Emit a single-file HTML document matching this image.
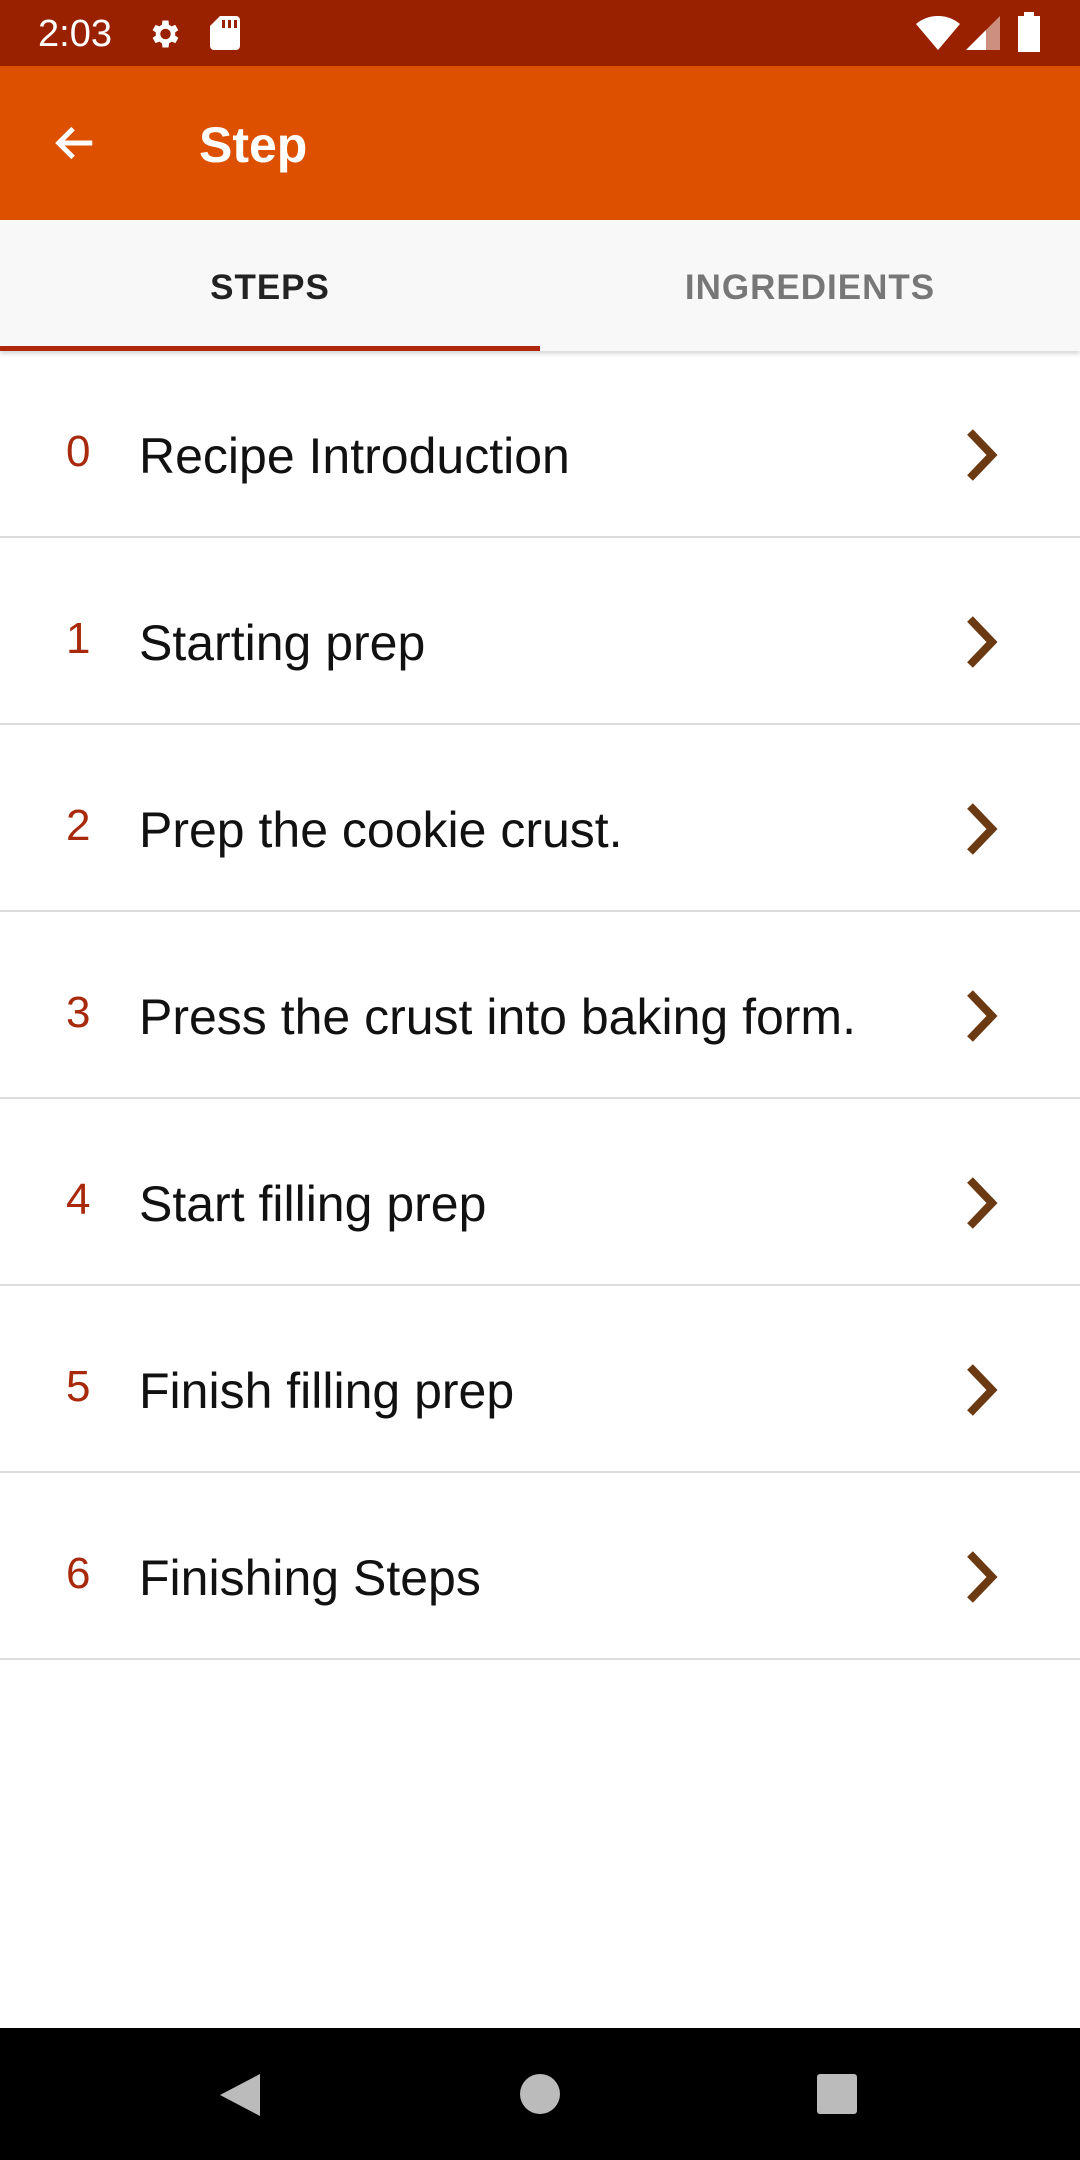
<!DOCTYPE html>
<html><head><meta charset="utf-8"><style>
*{margin:0;padding:0;box-sizing:border-box}
body{width:1080px;height:2160px;background:#fff;font-family:"Liberation Sans",Roboto,sans-serif;position:relative;overflow:hidden}
.status{position:absolute;top:0;left:0;width:1080px;height:66px;background:#9a2100;color:#fff}
.status .t{position:absolute;left:38px;top:13px;font-size:38px}
.app{position:absolute;top:66px;left:0;width:1080px;height:154px;background:#dd5000;color:#fff}
.app .title{position:absolute;left:199px;top:50px;font-size:50px;font-weight:bold}
.tabs{position:absolute;top:220px;left:0;width:1080px;height:131px;background:#f8f8f8;box-shadow:0 3px 4px rgba(0,0,0,.15)}
.tab{position:absolute;top:2px;width:540px;height:131px;line-height:131px;text-align:center;font-size:35px;font-weight:bold;letter-spacing:1px}
.ind{position:absolute;left:0;bottom:0;width:540px;height:5px;background:#b0280c}
.row{position:absolute;left:0;width:1080px;height:187px;border-bottom:2px solid #dcdcdc}
.row .n{position:absolute;left:66px;top:0;line-height:202px;font-size:44px;color:#a8290b}
.row .tx{position:absolute;left:139px;top:12px;line-height:187px;font-size:50px;color:#111}
.row svg{position:absolute;left:962px;top:76px}
.nav{position:absolute;top:2028px;left:0;width:1080px;height:132px;background:#000}
</style></head><body>
<div class="status"><span class="t">2:03</span>
<svg style="position:absolute;left:146px;top:16px" width="36" height="36" viewBox="0 0 24 24"><path fill="#fff" d="M19.4 13a7.5 7.5 0 000-2l2.1-1.6-2-3.5-2.5 1a7 7 0 00-1.7-1L15 3h-4l-.4 2.9a7 7 0 00-1.7 1l-2.5-1-2 3.5L6.6 11a7.5 7.5 0 000 2l-2.2 1.6 2 3.5 2.5-1a7 7 0 001.7 1L11 21h4l.4-2.9a7 7 0 001.7-1l2.5 1 2-3.5zM13 15.5a3.5 3.5 0 110-7 3.5 3.5 0 010 7z"/></svg>
<svg style="position:absolute;left:210px;top:16px" width="30" height="34" viewBox="0 0 15 17"><path fill="#fff" d="M5 0h8a2 2 0 012 2v13a2 2 0 01-2 2H2a2 2 0 01-2-2V5zM6 2v4h1.5V2zm3 0v4h1.5V2zm3 0v4h1.5V2z"/></svg>
<svg style="position:absolute;left:916px;top:16px" width="44" height="34" viewBox="0 0 22 17"><path fill="#fff" d="M11 17L0 4a17 17 0 0122 0z"/></svg>
<svg style="position:absolute;left:966px;top:16px" width="34" height="34" viewBox="0 0 17 17"><path fill="#fff" opacity=".5" d="M17 0v17H0z"/><path fill="#fff" d="M10 7v10H0z"/></svg>
<svg style="position:absolute;left:1018px;top:12px" width="22" height="40" viewBox="0 0 11 20"><path fill="#fff" d="M3 0h5v2h3v18H0V2h3z"/></svg>
</div>
<div class="app">
<svg style="position:absolute;left:52px;top:54px" width="46" height="46" viewBox="0 0 24 24"><path fill="none" stroke="#fff" stroke-width="2.6" d="M21 12H4M11 4.5L3.5 12l7.5 7.5"/></svg>
<span class="title">Step</span></div>
<div class="tabs"><div class="tab" style="left:0;color:#222">STEPS</div><div class="tab" style="left:540px;color:#777">INGREDIENTS</div><div class="ind"></div></div>

<div class="row" style="top:351px"><span class="n">0</span><span class="tx">Recipe Introduction</span><svg width="40" height="56" viewBox="0 0 40 56"><path d="M8 5l22 23L8 51" fill="none" stroke="#6b3a12" stroke-width="8"/></svg></div>
<div class="row" style="top:538px"><span class="n">1</span><span class="tx">Starting prep</span><svg width="40" height="56" viewBox="0 0 40 56"><path d="M8 5l22 23L8 51" fill="none" stroke="#6b3a12" stroke-width="8"/></svg></div>
<div class="row" style="top:725px"><span class="n">2</span><span class="tx">Prep the cookie crust.</span><svg width="40" height="56" viewBox="0 0 40 56"><path d="M8 5l22 23L8 51" fill="none" stroke="#6b3a12" stroke-width="8"/></svg></div>
<div class="row" style="top:912px"><span class="n">3</span><span class="tx">Press the crust into baking form.</span><svg width="40" height="56" viewBox="0 0 40 56"><path d="M8 5l22 23L8 51" fill="none" stroke="#6b3a12" stroke-width="8"/></svg></div>
<div class="row" style="top:1099px"><span class="n">4</span><span class="tx">Start filling prep</span><svg width="40" height="56" viewBox="0 0 40 56"><path d="M8 5l22 23L8 51" fill="none" stroke="#6b3a12" stroke-width="8"/></svg></div>
<div class="row" style="top:1286px"><span class="n">5</span><span class="tx">Finish filling prep</span><svg width="40" height="56" viewBox="0 0 40 56"><path d="M8 5l22 23L8 51" fill="none" stroke="#6b3a12" stroke-width="8"/></svg></div>
<div class="row" style="top:1473px"><span class="n">6</span><span class="tx">Finishing Steps</span><svg width="40" height="56" viewBox="0 0 40 56"><path d="M8 5l22 23L8 51" fill="none" stroke="#6b3a12" stroke-width="8"/></svg></div>

<div class="nav">
<svg style="position:absolute;left:218px;top:44px" width="44" height="46" viewBox="0 0 44 46"><path fill="#bbb" d="M42 2v42L2 23z"/></svg>
<div style="position:absolute;left:520px;top:46px;width:40px;height:40px;border-radius:50%;background:#bbb"></div>
<div style="position:absolute;left:817px;top:46px;width:40px;height:40px;border-radius:3px;background:#bbb"></div>
</div>
</body></html>
